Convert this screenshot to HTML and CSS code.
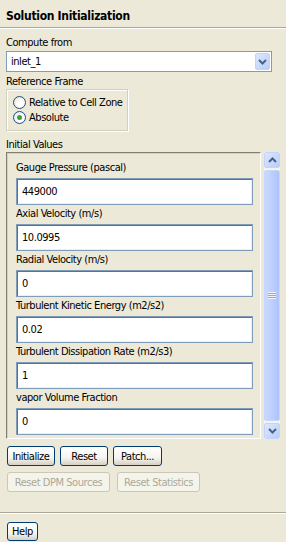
FILE: index.html
```html
<!DOCTYPE html>
<html lang="en">
<head>
    <meta charset="UTF-8">
    <title>Solution Initialization</title>
    <link rel="stylesheet" href="styles.css">
</head>
<body>
    <div class="panel">
        <h1 class="title">Solution Initialization</h1>

        <div class="body">
            <div class="label compute">Compute from</div>
            <div class="combo">
                <span class="combo-value">inlet_1</span>
                <span class="combo-btn">
                    <svg width="9" height="6" viewBox="0 0 9 6"><path d="M1 1 L4.5 4.5 L8 1" fill="none" stroke="#4d6185" stroke-width="2"/></svg>
                </span>
            </div>

            <div class="label frame">Reference Frame</div>
            <div class="group">
                <label class="radio"><span class="dot"></span>Relative to Cell Zone</label>
                <label class="radio"><span class="dot checked"></span>Absolute</label>
            </div>

            <div class="label initial">Initial Values</div>
            <div class="values">
                <div class="fields">
                    <div class="field">
                        <div class="field-label">Gauge Pressure (pascal)</div>
                        <div class="input">449000</div>
                    </div>
                    <div class="field">
                        <div class="field-label">Axial Velocity (m/s)</div>
                        <div class="input">10.0995</div>
                    </div>
                    <div class="field">
                        <div class="field-label">Radial Velocity (m/s)</div>
                        <div class="input">0</div>
                    </div>
                    <div class="field">
                        <div class="field-label">Turbulent Kinetic Energy (m2/s2)</div>
                        <div class="input">0.02</div>
                    </div>
                    <div class="field">
                        <div class="field-label">Turbulent Dissipation Rate (m2/s3)</div>
                        <div class="input">1</div>
                    </div>
                    <div class="field">
                        <div class="field-label">vapor Volume Fraction</div>
                        <div class="input">0</div>
                    </div>
                </div>
                <div class="scrollbar">
                    <span class="sb-btn">
                        <svg width="9" height="6" viewBox="0 0 9 6"><path d="M1 5 L4.5 1.5 L8 5" fill="none" stroke="#4d6185" stroke-width="2"/></svg>
                    </span>
                    <span class="sb-thumb"><span class="grip"></span></span>
                    <span class="sb-btn">
                        <svg width="9" height="6" viewBox="0 0 9 6"><path d="M1 1 L4.5 4.5 L8 1" fill="none" stroke="#4d6185" stroke-width="2"/></svg>
                    </span>
                </div>
            </div>

            <div class="buttons">
                <button class="btn w48">Initialize</button>
                <button class="btn w48">Reset</button>
                <button class="btn w49">Patch...</button>
            </div>
            <div class="buttons second">
                <button class="btn disabled w103" disabled>Reset DPM Sources</button>
                <button class="btn disabled w83" disabled>Reset Statistics</button>
            </div>
        </div>

        <div class="footer">
            <button class="btn help">Help</button>
        </div>
    </div>
</body>
</html>
```

FILE: styles.css
```css
* {
    margin: 0;
    padding: 0;
    box-sizing: border-box;
}

body {
    font-family: Tahoma, 'DejaVu Sans Condensed', 'Liberation Sans', sans-serif;
    font-size: 11px;
    letter-spacing: -0.45px;
    color: #000;
    background: #ece9d8;
    width: 286px;
    height: 542px;
    overflow: hidden;
}

.panel {
    height: 542px;
    display: flex;
    flex-direction: column;
}

.title {
    font-size: 12px;
    letter-spacing: -0.3px;
    font-weight: bold;
    height: 29px;
    line-height: 26px;
    padding-left: 6px;
    padding-top: 3px;
    border-bottom: 1px solid #fff;
    box-shadow: inset 0 -1px 0 #aca899;
}

.body {
    height: 483px;
    padding: 0 6px;
}

.label {
    height: 14px;
    line-height: 14px;
    white-space: nowrap;
}

.label.compute { margin-top: 7px; }
.label.frame { margin-top: 3px; }
.label.initial { margin-top: 7px; }

.combo {
    margin-top: 1px;
    width: 266px;
    height: 21px;
    border: 1px solid #7f9db9;
    background: #fff;
    display: flex;
    align-items: center;
    padding: 0 1px 0 4px;
}

.combo-value {
    flex: 1;
}

.combo-btn,
.sb-btn {
    width: 15px;
    height: 17px;
    display: flex;
    align-items: center;
    justify-content: center;
    background: linear-gradient(135deg, #dde8fe 0%, #b7cdfb 100%);
    border: 1px solid #c3d3fd;
    border-radius: 2px;
}

.group {
    width: 122px;
    height: 42px;
    border: 1px solid #d0d0bf;
    box-shadow: inset 1px 1px 0 #fff, 1px 1px 0 #fff;
    padding: 5px 0 0 6px;
}

.radio {
    display: flex;
    align-items: center;
    gap: 3px;
    height: 15px;
    white-space: nowrap;
}

.dot {
    width: 13px;
    height: 13px;
    flex: none;
    border-radius: 50%;
    border: 1px solid #1c5180;
    background: radial-gradient(circle at 60% 60%, #fff 30%, #dcd9cc 100%);
    display: flex;
    align-items: center;
    justify-content: center;
}

.dot.checked::after {
    content: "";
    width: 5px;
    height: 5px;
    border-radius: 50%;
    background: #3ba13b;
}

.values {
    width: 274px;
    height: 287px;
    display: flex;
    gap: 3px;
}

.fields {
    width: 255px;
    height: 287px;
    border: 1px solid #808070;
    border-right-color: #fff;
    border-bottom-color: #fff;
    box-shadow: inset 1px 1px 0 #d4d0c8;
    padding: 8px 0 0 9px;
    display: flex;
    flex-direction: column;
    gap: 2px;
}

.field-label {
    height: 15px;
    line-height: 14px;
    margin-bottom: 2px;
    white-space: nowrap;
}

.input {
    width: 237px;
    height: 27px;
    border: 1px solid #7f9db9;
    background: #fff;
    box-shadow: inset 1px 1px 0 #716f64, inset 2px 2px 0 #ffffff, inset -1px -1px 0 #f1efe2;
    padding: 0 0 0 5px;
    line-height: 25px;
}

.scrollbar {
    width: 16px;
    height: 287px;
    display: flex;
    flex-direction: column;
    gap: 2px;
    background: #f5f5f0;
}

.sb-btn {
    height: 16px;
    width: 16px;
}

.sb-thumb {
    flex: 1;
    background: linear-gradient(90deg, #cad9fd 0%, #bccffd 50%, #adc4fb 100%);
    border: 1px solid #c6d6fd;
    border-radius: 2px;
    display: flex;
    align-items: center;
    justify-content: center;
}

.grip {
    width: 8px;
    height: 7px;
    background: repeating-linear-gradient(180deg, #eef3fe 0 1px, #8fa8e6 1px 2px);
}

.buttons {
    display: flex;
    gap: 5px;
    margin-top: 7px;
    padding-left: 1px;
}

.buttons.second {
    margin-top: 6px;
    gap: 7px;
}

.btn {
    font-family: inherit;
    font-size: 11px;
    letter-spacing: -0.45px;
    height: 20px;
    padding: 0;
    border: 1px solid #003c74;
    border-radius: 3px;
    background: linear-gradient(180deg, #ffffff 0%, #f5f4ee 60%, #d6d0c5 100%);
    color: #000;
    text-align: center;
}

.btn.disabled {
    border-color: #c9c7ba;
    background: #f5f4ea;
    color: #aca899;
}

.w48 { width: 48px; }
.w49 { width: 49px; }
.w103 { width: 103px; }
.w83 { width: 83px; }

.footer {
    height: 30px;
    border-top: 1px solid #aca899;
    box-shadow: inset 0 1px 0 #fff;
    padding: 9px 0 0 7px;
}

.btn.help {
    width: 31px;
    height: 19px;
}
```
